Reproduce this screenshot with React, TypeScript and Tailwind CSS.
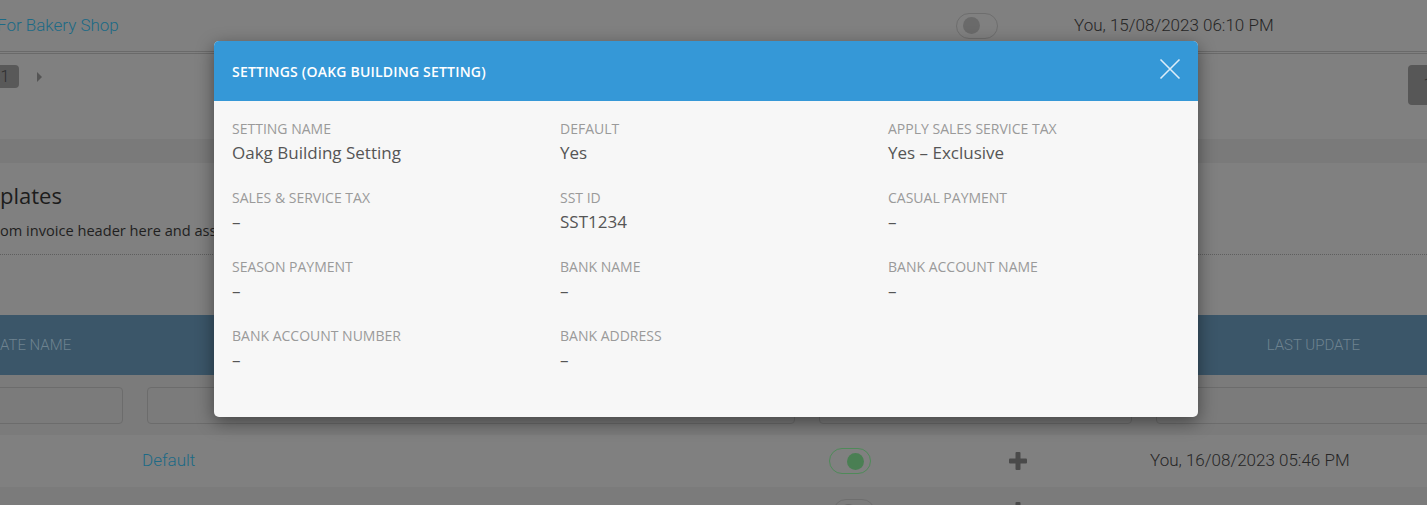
import React from "react";

const modalFont = { fontFamily: '"Open Sans", "Noto Sans", sans-serif' };
const bgFont = { fontFamily: 'Roboto, "Liberation Sans", sans-serif' };

function Toggle({ on, className = "" }: { on?: boolean; className?: string }) {
  return (
    <div
      className={
        "flex h-[26px] w-[42px] shrink-0 items-center rounded-full border px-[6px] " +
        (on ? "justify-end border-[#4f8a59]" : "justify-start border-[#6e6e6e]") +
        " " +
        className
      }
    >
      <div className={"h-[17px] w-[17px] rounded-full " + (on ? "bg-[#4a7f53]" : "bg-[#6a6a6a]")} />
    </div>
  );
}

function Plus() {
  return (
    <svg width="18" height="18" viewBox="0 0 18 18" className="shrink-0">
      <rect x="6.5" y="0" width="5" height="18" rx="1" fill="#4a4a4a" />
      <rect x="0" y="6.5" width="18" height="5" rx="1" fill="#4a4a4a" />
    </svg>
  );
}

const fields: { label: string; value: string }[] = [
  { label: "SETTING NAME", value: "Oakg Building Setting" },
  { label: "DEFAULT", value: "Yes" },
  { label: "APPLY SALES SERVICE TAX", value: "Yes – Exclusive" },
  { label: "SALES & SERVICE TAX", value: "–" },
  { label: "SST ID", value: "SST1234" },
  { label: "CASUAL PAYMENT", value: "–" },
  { label: "SEASON PAYMENT", value: "–" },
  { label: "BANK NAME", value: "–" },
  { label: "BANK ACCOUNT NAME", value: "–" },
  { label: "BANK ACCOUNT NUMBER", value: "–" },
  { label: "BANK ADDRESS", value: "–" },
];

export default function App() {
  return (
    <div className="relative h-[505px] w-[1427px] overflow-hidden bg-[#808080]" style={bgFont}>
      {/* Background page (dimmed) */}
      <div className="flex flex-col">
        {/* Row 1 */}
        <div className="flex h-[51px] items-center">
          <div className="w-[956px] shrink-0">
            <span className="ml-[-3px] block whitespace-nowrap text-[17px] font-light text-[#1c6a86]">For Bakery Shop</span>
          </div>
          <Toggle />
          <div className="w-[76px] shrink-0" />
          <span className="whitespace-nowrap text-[17px] font-light text-[#262626]">You, 15/08/2023 06:10 PM</span>
        </div>
        <div className="h-[3px] border-y border-[#6a6a6a]" />
        {/* Pagination */}
        <div className="flex h-[85px] items-start pt-[11px]">
          <div className="ml-[-9px] flex h-[23px] w-[28px] items-center justify-center rounded-[4px] bg-[#595959] text-[16px] font-light text-[#2e2e2e]">
            1
          </div>
          <div className="ml-[18px] mt-[7px] h-0 w-0 border-y-[5px] border-l-[5px] border-y-transparent border-l-[#555]" />
          <div className="ml-auto mr-[-21px] flex h-[40px] w-[40px] items-center justify-center rounded-[4px] bg-[#575757] text-[16px] font-light text-[#2e2e2e]">
            1
          </div>
        </div>
        <div className="h-[24px] bg-[#7a7a7a]" />
        {/* Card */}
        <div className="flex flex-col pt-[18px]">
          <div className="flex h-[28px] items-center text-[22px] font-medium text-[#1c1c1c]" style={modalFont}>
            <div className="flex w-0 justify-end whitespace-nowrap">Invoice Tem</div>
            <span className="whitespace-nowrap">plates</span>
          </div>
          <div className="mt-[12px] flex h-[20px] items-center text-[14.6px] text-[#1f1f1f]" style={modalFont}>
            <div className="flex w-0 justify-end whitespace-nowrap">Create your own cust</div>
            <span className="whitespace-nowrap">om invoice header here and assign it to your building settings.</span>
          </div>
          <div className="mt-[13px] border-b border-dotted border-[#5e5e5e]" />
          <div className="h-[60px]" />
          {/* Table header */}
          <div className="flex h-[60px] items-center bg-[#3b5669] text-[15px] font-light text-[#6e8390]">
            <div className="flex w-0 justify-end whitespace-nowrap">TEMPL</div>
            <span className="whitespace-nowrap">ATE NAME</span>
            <div className="flex-1" />
            <span className="mr-[67px] whitespace-nowrap">LAST UPDATE</span>
          </div>
          {/* Filter row */}
          <div className="flex h-[60px] items-start gap-[24px] bg-[#7b7b7b] pt-[12px]">
            <div className="ml-[-60px] h-[37px] w-[183px] shrink-0 rounded-[4px] border border-[#6c6c6c]" />
            <div className="h-[37px] w-[648px] shrink-0 rounded-[4px] border border-[#6c6c6c]" />
            <div className="h-[37px] w-[313px] shrink-0 rounded-[4px] border border-[#6c6c6c]" />
            <div className="h-[37px] w-[300px] shrink-0 rounded-[4px] border border-[#6c6c6c]" />
          </div>
          {/* Data row */}
          <div className="flex h-[52px] items-center">
            <div className="w-[142px] shrink-0" />
            <div className="w-[687px] shrink-0">
              <span className="whitespace-nowrap text-[17px] font-light text-[#1c6a86]">Default</span>
            </div>
            <Toggle on />
            <div className="w-[138px] shrink-0" />
            <Plus />
            <div className="w-[123px] shrink-0" />
            <span className="whitespace-nowrap text-[17px] font-light text-[#262626]">You, 16/08/2023 05:46 PM</span>
          </div>
          {/* Next row */}
          <div className="flex h-[52px] items-start bg-[#7b7b7b] pt-[12px]">
            <div className="w-[142px] shrink-0" />
            <div className="w-[691px] shrink-0 pt-[3px]">
              <span className="whitespace-nowrap text-[17px] font-light text-[#1c6a86]">For Bakery Shop</span>
            </div>
            <Toggle />
            <div className="w-[134px] shrink-0" />
            <div className="pt-[3px]">
              <Plus />
            </div>
          </div>
        </div>
      </div>

      {/* Modal */}
      <div
        className="absolute left-[214px] top-[41px] w-[984px] overflow-hidden rounded-[5px] bg-[#f7f7f7] shadow-[0_5px_18px_rgba(0,0,0,0.45)]"
        style={modalFont}
      >
        <div className="flex h-[60px] items-center justify-between bg-[#3598d7] pl-[18px] pr-[17px]">
          <span className="text-[14px] font-semibold tracking-[0.2px] text-white">SETTINGS (OAKG BUILDING SETTING)</span>
          <svg width="22" height="22" viewBox="0 0 22 22" className="mb-[4px]">
            <path d="M1.5 1.5 L20.5 20.5 M20.5 1.5 L1.5 20.5" stroke="#dcecf8" strokeWidth="1.6" fill="none" />
          </svg>
        </div>
        <div className="grid grid-cols-3 gap-y-[23px] pb-[45px] pt-[18px]">
          {fields.map((f) => (
            <div key={f.label} className="flex flex-col pl-[18px]">
              <span className="text-[14px] leading-[20px] text-[#9a9a9a]">{f.label}</span>
              <span className="mt-[2px] text-[17px] leading-[24px] text-[#555555]">{f.value}</span>
            </div>
          ))}
        </div>
      </div>
    </div>
  );
}
